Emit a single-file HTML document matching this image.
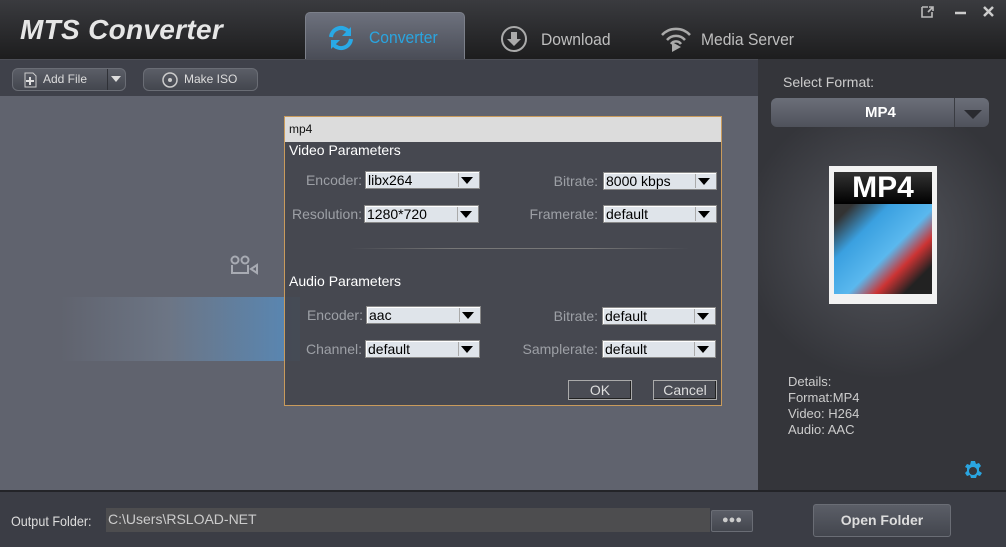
<!DOCTYPE html>
<html><head><meta charset="utf-8"><style>
*{margin:0;padding:0;box-sizing:border-box}
body{width:1006px;height:547px;overflow:hidden;position:relative;font-family:"Liberation Sans",sans-serif;background:#60636e}
.abs{position:absolute}
#hdr{left:0;top:0;width:1006px;height:59px;background:linear-gradient(#3a3b3f,#1d1d1e)}
#logo{left:20px;top:14px;font:italic bold 28px "Liberation Sans",sans-serif;color:#e6e6e6;letter-spacing:0.3px}
#tab{left:305px;top:12px;width:160px;height:47px;background:linear-gradient(#6d717d,#4a4d57);border-radius:5px 5px 0 0;border:1px solid #7c808a;border-bottom:none}
.tabt{font-size:17px;color:#bfbfbf;transform:scaleX(.92);transform-origin:left}
#tb{left:0;top:59px;width:758px;height:37px;background:#3f414a;border-top:1px solid #4c4e56}
.btn{background:linear-gradient(#5b5e67,#43464e);border:1px solid #6a6d75;border-radius:6px;color:#ddd;font-size:12px}
#rp{left:758px;top:59px;width:248px;height:431px;background:radial-gradient(ellipse 140px 140px at 124px 180px,#55575e,#34353a)}
#ft{left:0;top:490px;width:1006px;height:57px;background:#3b3d45;border-top:2px solid #232428}
#dlg{left:284px;top:116px;width:438px;height:290px;border:1px solid #c99b5c;background:rgba(68,70,78,0.93)}
#dt{height:25px;background:#dcdcdc;font-size:12px;color:#111;padding:5px 4px}
.lbl{font-size:14px;color:#9da0a6;text-align:right}
.sel{height:18px;background:#dfe4ea;border:1px solid #888;box-shadow:inset 1px 1px 0 #fff;font-size:14px;color:#000;padding-left:2px;line-height:16px}
.sel:after{content:"";position:absolute;right:2px;top:1px;width:18px;height:14px;background:#dfe4ea;border-left:1px solid #aaa}
.sel i{position:absolute;right:6px;top:5px;width:0;height:0;border-left:6px solid transparent;border-right:6px solid transparent;border-top:7px solid #000;z-index:2}
.sec{font-size:14px;color:#fff}
.db{height:20px;border:1px solid #aaa;background:#4a4c54;color:#ddd;font-size:14px;text-align:center;line-height:18px;box-shadow:inset -1px -1px 0 #222}
</style></head><body>
<div id="hdr" class="abs"></div>
<div id="logo" class="abs">MTS Converter</div>
<div id="tab" class="abs"></div>
<svg class="abs" style="left:326px;top:24px" width="30" height="28" viewBox="0 0 30 28"><path d="M5 13a10 10 0 0 1 18-5" stroke="#29a9e6" stroke-width="4" fill="none"/><path d="M25 3v9h-9z" fill="#29a9e6"/><path d="M25 15a10 10 0 0 1-18 5" stroke="#29a9e6" stroke-width="4" fill="none"/><path d="M5 25v-9h9z" fill="#29a9e6"/></svg>
<div class="abs tabt" style="left:369px;top:28px;color:#2aa5e0">Converter</div>
<svg class="abs" style="left:500px;top:25px" width="28" height="28"><circle cx="14" cy="14" r="12" stroke="#aaa" stroke-width="2" fill="none"/><path d="M11 7h6v7h4l-7 7-7-7h4z" fill="#aaa"/></svg>
<div class="abs tabt" style="left:541px;top:30px">Download</div>
<svg class="abs" style="left:660px;top:24px" width="32" height="28"><path d="M2 11a19 19 0 0 1 28 0M7 16a12 12 0 0 1 18 0M11 20a6 6 0 0 1 10 0" stroke="#aaa" stroke-width="2.5" fill="none"/><path d="M12 18l9 5-9 5z" fill="#aaa"/></svg>
<div class="abs tabt" style="left:701px;top:30px">Media Server</div>
<svg class="abs" style="left:920px;top:4px" width="80" height="16"><path d="M2 3h6M2 3v10h10v-5M8 8l5-5M9 3h4v4" stroke="#bbb" stroke-width="1.6" fill="none"/><path d="M35 9h11" stroke="#ccc" stroke-width="2.5"/><path d="M64 3l9 9M73 3l-9 9" stroke="#ccc" stroke-width="2.5"/></svg>
<div id="tb" class="abs"></div>
<div class="abs btn" style="left:12px;top:68px;width:114px;height:23px"></div>
<div class="abs" style="left:107px;top:69px;width:1px;height:21px;background:#2f3137"></div>
<svg class="abs" style="left:22px;top:72px" width="16" height="16"><path d="M3 1h8l3 3v11H3z" stroke="#ccc" fill="none"/><path d="M8 5v8M4 9h8" stroke="#ddd" stroke-width="2"/></svg>
<div class="abs" style="left:43px;top:72px;font-size:12px;color:#ddd">Add File</div>
<div class="abs" style="left:111px;top:76px;border-left:5px solid transparent;border-right:5px solid transparent;border-top:6px solid #ddd"></div>
<div class="abs btn" style="left:143px;top:68px;width:115px;height:23px"></div>
<svg class="abs" style="left:161px;top:71px" width="18" height="18"><circle cx="9" cy="9" r="7" stroke="#ccc" stroke-width="1.5" fill="none"/><circle cx="9" cy="9" r="2" fill="#ccc"/></svg>
<div class="abs" style="left:184px;top:72px;font-size:12px;color:#ddd">Make ISO</div>
<div class="abs" style="left:60px;top:297px;width:240px;height:64px;background:linear-gradient(90deg,rgba(96,99,110,0),rgba(120,135,155,.5) 45%,rgba(85,145,200,.8))"></div>
<svg class="abs" style="left:229px;top:255px" width="32" height="24"><circle cx="6" cy="5" r="3.5" stroke="#a8abb3" stroke-width="2" fill="none"/><circle cx="16" cy="5" r="3.5" stroke="#a8abb3" stroke-width="2" fill="none"/><path d="M3 10v8h16v-8M22 14l6-4v8z" stroke="#a8abb3" stroke-width="2" fill="none"/></svg>
<div id="rp" class="abs"></div>
<div class="abs" style="left:783px;top:74px;font-size:14px;color:#ccc">Select Format:</div>
<div class="abs" style="left:771px;top:98px;width:218px;height:29px;border-radius:6px;background:linear-gradient(#6b6f79,#4f525b)"></div>
<div class="abs" style="left:954px;top:98px;width:1px;height:29px;background:#3a3c42"></div>
<div class="abs" style="left:865px;top:104px;font-size:15px;font-weight:bold;color:#fff">MP4</div>
<div class="abs" style="left:964px;top:110px;border-left:9px solid transparent;border-right:9px solid transparent;border-top:9px solid #2a2b30"></div>
<div class="abs" style="left:829px;top:166px;width:108px;height:138px;background:#f2f2f2;padding:6px 5px 4px"><div style="height:32px;background:linear-gradient(#333,#000);color:#fff;font:bold 30px 'Liberation Sans',sans-serif;text-align:center;line-height:32px">MP4</div><div style="height:90px;background:linear-gradient(135deg,#333 10%,#3aa0e0 30%,#5ab8ee 55%,#c33 70%,#222 85%)"></div></div>
<div class="abs" style="left:788px;top:374px;font-size:13px;color:#ccc;line-height:16px">Details:<br>Format:MP4<br>Video: H264<br>Audio: AAC</div>
<svg class="abs" style="left:962px;top:460px" width="22" height="22" viewBox="0 0 22 22"><path d="M9 1h4l1 3 3-1 2 3-2 2 0 3 3 2-2 3-3-1-1 3H9l-1-3-3 1-2-3 2-2v-3L3 7l2-3 3 1z" fill="#2aa5e0"/><circle cx="11" cy="11" r="4" fill="#34353a"/></svg>
<div id="ft" class="abs"></div>
<div class="abs" style="left:11px;top:513px;font-size:14px;color:#ddd;transform:scaleX(.9);transform-origin:left">Output Folder:</div>
<div class="abs" style="left:106px;top:508px;width:604px;height:24px;background:#4d4d4f;font-size:14px;color:#ccc;padding:3px 2px">C:\Users\RSLOAD-NET</div>
<div class="abs btn" style="left:711px;top:510px;width:42px;height:22px;border-radius:2px;text-align:center;font-size:11px;color:#ccc;line-height:18px">●●●</div>
<div class="abs btn" style="left:813px;top:504px;width:138px;height:33px;border-radius:3px;text-align:center;line-height:31px;font-size:14px;font-weight:bold;color:#ddd">Open Folder</div>
<div id="dlg" class="abs"><div id="dt">mp4</div></div>
<div class="abs" style="left:289px;top:142px" ><span class="sec">Video Parameters</span></div>
<div class="abs lbl" style="left:290px;top:172px;width:72px">Encoder:</div>
<div class="abs sel" style="left:365px;top:171px;width:115px">libx264<i></i></div>
<div class="abs lbl" style="left:530px;top:173px;width:68px">Bitrate:</div>
<div class="abs sel" style="left:603px;top:172px;width:114px">8000 kbps<i></i></div>
<div class="abs lbl" style="left:288px;top:206px;width:74px">Resolution:</div>
<div class="abs sel" style="left:364px;top:205px;width:115px">1280*720<i></i></div>
<div class="abs lbl" style="left:520px;top:206px;width:78px">Framerate:</div>
<div class="abs sel" style="left:603px;top:205px;width:114px">default<i></i></div>
<div class="abs" style="left:350px;top:248px;width:340px;height:1px;background:linear-gradient(90deg,transparent,#777 30%,#777 70%,transparent)"></div>
<div class="abs" style="left:289px;top:273px"><span class="sec">Audio Parameters</span></div>
<div class="abs lbl" style="left:290px;top:307px;width:73px">Encoder:</div>
<div class="abs sel" style="left:366px;top:306px;width:115px">aac<i></i></div>
<div class="abs lbl" style="left:530px;top:308px;width:68px">Bitrate:</div>
<div class="abs sel" style="left:602px;top:307px;width:114px">default<i></i></div>
<div class="abs lbl" style="left:290px;top:341px;width:72px">Channel:</div>
<div class="abs sel" style="left:365px;top:340px;width:115px">default<i></i></div>
<div class="abs lbl" style="left:510px;top:341px;width:88px">Samplerate:</div>
<div class="abs sel" style="left:602px;top:340px;width:114px">default<i></i></div>
<div class="abs db" style="left:568px;top:380px;width:64px">OK</div>
<div class="abs db" style="left:653px;top:380px;width:64px">Cancel</div>
</body></html>
